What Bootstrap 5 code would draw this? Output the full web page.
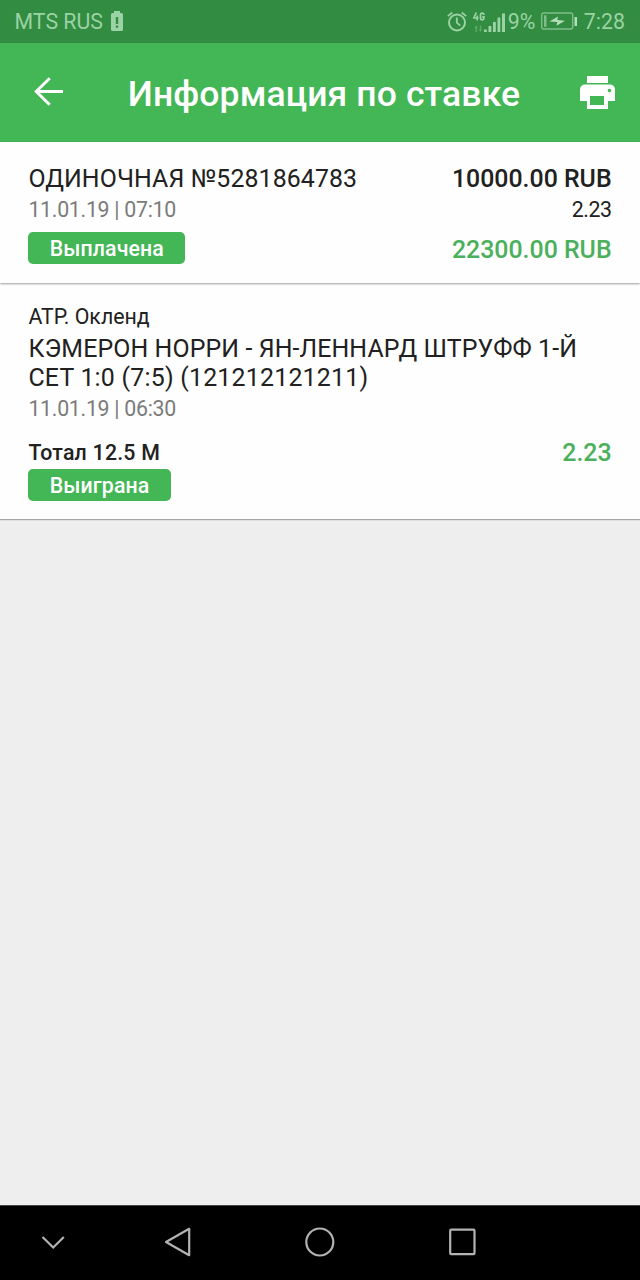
<!DOCTYPE html>
<html lang="ru">
<head>
<meta charset="utf-8">
<meta name="viewport" content="width=device-width, initial-scale=1">
<title>Информация по ставке</title>
<link rel="stylesheet" href="https://cdn.jsdelivr.net/npm/bootstrap@5.3.0/dist/css/bootstrap.min.css">
<style>
  body { font-family: Roboto, sans-serif; font-size: 21.33px; line-height: 25px; color: #212121; background: #eee; }
  svg { display: block; flex: none; }
  .status-bar { height: 43px; padding: 0 15px 0 14.5px; background: #328c42; color: #9bd3a4; }
  .app-bar { height: 99px; padding: 0 24px 2px 33px; background: #43b655; color: #fff; }
  .app-title { font-size: 35.56px; line-height: 42px; font-weight: 500; margin: 5px 0 0 4px; letter-spacing: .1px; }
  .panel { background: #fefefe; padding-left: 28.4px; padding-right: 28.4px; }
  .summary { height: 141px; padding-top: 21.6px; box-shadow: 0 1px 2px rgba(0,0,0,.38); position: relative; }
  .event { height: 236px; padding-top: 21.2px; box-shadow: 0 1px 1px rgba(0,0,0,.3); }
  .line-lg { font-size: 24.89px; line-height: 29.2px; }
  .kind { letter-spacing: .1px; }
  .match { margin-top: 4.8px; letter-spacing: .11px; }
  .score { letter-spacing: .23px; }
  .fw-md { font-weight: 500; }
  .muted { color: #7b7b7b; letter-spacing: -.28px; }
  .odds { letter-spacing: -.4px; }
  .win { color: #4bb05c; }
  .state { height: 32px; border-radius: 5px; background: #43b655; color: #fff; padding: 3.9px 21.3px; font-weight: 500; letter-spacing: .1px; }
  .nav-keys { height: 75px; background: #000; border-top: 1px solid #444; padding-bottom: 2px; }
</style>
</head>
<body>
<div class="d-flex flex-column vh-100 overflow-hidden">
  <div class="status-bar d-flex align-items-center">
    <span>MTS RUS</span>
    <svg class="ms-2" width="12" height="21" viewBox="0 0 12 21"><path fill="#9bd3a4" d="M3 0h6v2h1.500q1.500 0 1.500 1.500v15q0 1.500-1.500 1.500h-9Q0 20 0 18.500v-15Q0 2 1.500 2H3z"/><path fill="#328c42" d="M4.800 6h2.400v7H4.800zM4.800 14.500h2.400v2.300H4.800z"/></svg>
    <svg class="ms-auto" width="20" height="21" viewBox="0 0 20 21" fill="none" stroke="#9bd3a4" stroke-width="2"><circle cx="10" cy="11.500" r="8"/><path d="M9.800 6.500v5.200l3.400 3" stroke-width="1.800"/><path d="M.8 5.200 5.300 1.500M19.200 5.200l-4.500-3.700" stroke-width="1.700"/></svg>
    <svg style="margin-left:6px" width="33" height="22" viewBox="0 0 33 22"><g fill="none" stroke="#9bd3a4" stroke-width="1.700"><path d="M3.300 1.500.8 7h4.700M4.200 4.500v5M10.800 4V3.300Q10.800 2.200 9.200 2.200 7.500 2.200 7.500 4v3Q7.500 8.800 9.200 8.800 10.900 8.800 10.900 7.500V5.800H9.200"/></g><g fill="#5bab68"><path d="M3.200 14.500 5 17H3.900v4H2.500v-4H1.400zM7.500 21l-1.800-2.500h1.100v-4h1.400v4h1.100z"/></g><g fill="#9bd3a4"><path d="M11 18.500h2.800V21h-2.800zM15.500 15h2.800v6h-2.800zM20 11h2.800v10H20zM24.500 6.500h2.800V21h-2.800zM29 2.500h3V21h-3z"/></g></svg>
    <span style="margin-left:2px">9%</span>
    <svg style="margin-left:5.500px" width="37" height="19" viewBox="0 0 37 19"><rect x=".7" y="1" width="31" height="16" rx="2" fill="none" stroke="#80bd89" stroke-width="1.400"/><path fill="#80bd89" d="M3 3.300h2.500v11.500H3z"/><path fill="#b4deb9" d="m8.500 9.600 8.500-5-.7 3.300 7.700.8-8.500 5 .8-3.600zM33.500 5H36v9h-2.500z"/></svg>
    <span style="margin-left:6px">7:28</span>
  </div>

  <header class="app-bar d-flex align-items-center justify-content-between">
    <svg width="32" height="32" viewBox="0 0 32 32" fill="none" stroke="#fff" stroke-width="3"><path d="M30 15.500H4M16.700 2.200 3.300 15.500l13.400 13.300"/></svg>
    <h1 class="app-title">Информация по ставке</h1>
    <svg width="37" height="34" viewBox="0 0 37 34"><path fill="#fff" d="M8 1h21v7H8zM6.500 9.500h24q5.500 0 5.500 5.500v11h-7v8H8v-8H1V15q0-5.500 5.500-5.500z"/><path fill="#43b655" d="M11 21h14v9H11z"/><circle cx="30.500" cy="15.500" r="1.800" fill="#43b655"/></svg>
  </header>

  <section class="panel summary d-flex justify-content-between">
    <div>
      <div class="line-lg kind">ОДИНОЧНАЯ №5281864783</div>
      <div class="muted" style="margin-top:4px">11.01.19 | 07:10</div>
      <div class="state d-inline-block" style="margin-top:10px">Выплачена</div>
    </div>
    <div class="text-end">
      <div class="line-lg fw-md">10000.00 RUB</div>
      <div class="odds" style="margin-top:4px">2.23</div>
      <div class="line-lg fw-md win" style="margin-top:13.400px">22300.00 RUB</div>
    </div>
  </section>

  <section class="panel event">
    <div>АТР. Окленд</div>
    <div class="line-lg match">КЭМЕРОН НОРРИ - ЯН-ЛЕННАРД ШТРУФФ 1-Й<br><span class="score">СЕТ 1:0 (7:5) (121212121211)</span></div>
    <div class="muted" style="margin-top:3.700px">11.01.19 | 06:30</div>
    <div class="d-flex justify-content-between" style="margin-top:17px">
      <div style="margin-top:2px">
        <div class="fw-md" style="letter-spacing:.22px">Тотал 12.5 М</div>
        <div class="state d-inline-block" style="margin-top:4.300px">Выиграна</div>
      </div>
      <div class="line-lg fw-md win">2.23</div>
    </div>
  </section>

  <nav class="nav-keys mt-auto d-flex align-items-center">
    <svg width="640" height="34" viewBox="0 0 640 34" fill="none" stroke="#b3b3b3" stroke-width="2.200"><path d="m42.500 12 10.700 10.500L63.800 12"/><path stroke-linejoin="round" d="M189.200 3.800v26.400L166 17z"/><circle cx="319.800" cy="17" r="13.500"/><rect x="450.200" y="4.700" width="24.300" height="24.500" rx="1"/></svg>
  </nav>
</div>
<script src="https://cdn.jsdelivr.net/npm/bootstrap@5.3.0/dist/js/bootstrap.bundle.min.js"></script>
</body>
</html>
